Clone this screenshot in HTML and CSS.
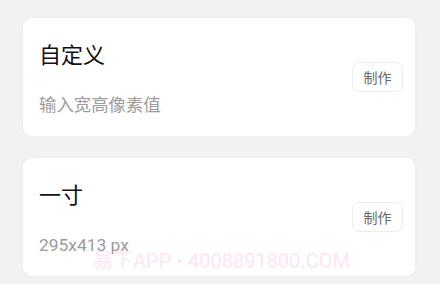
FILE: index.html
```
<!DOCTYPE html>
<html lang="zh">
<head>
<meta charset="utf-8">
<link rel="stylesheet" href="styles.css">
</head>
<body>
<div class="list">
  <div class="card">
    <div class="info">
      <div class="title">自定义</div>
      <div class="sub">输入宽高像素值</div>
    </div>
    <button class="btn">制作</button>
  </div>
  <div class="card">
    <div class="info">
      <div class="title">一寸</div>
      <div class="sub">295x413 px</div>
    </div>
    <button class="btn">制作</button>
  </div>
</div>
<div class="watermark">易下APP • 4008891800.COM</div>
</body>
</html>
```
FILE: styles.css
```
html, body {
  margin: 0;
  padding: 0;
  background: #f2f2f2;
  font-family: Roboto, "Noto Sans CJK SC", sans-serif;
  width: 440px;
  height: 284px;
  overflow: hidden;
  position: relative;
}
.list {
  display: flex;
  flex-direction: column;
  gap: 22px;
  padding: 18px 25px 0 23px;
}
.card {
  height: 118px;
  box-sizing: border-box;
  background: #fff;
  border-radius: 9px;
  box-shadow: 0 0 4px rgba(0,0,0,0.03);
  display: flex;
  align-items: center;
  justify-content: space-between;
  padding: 0 12px 0 16px;
}
.info {
  display: flex;
  flex-direction: column;
  align-self: stretch;
  padding-top: 23px;
}
.title {
  font-size: 22px;
  line-height: 30px;
  color: #111;
  margin-bottom: 23px;
}
.sub {
  font-size: 17.4px;
  line-height: 22px;
  color: #9c9c9c;
}
.btn {
  width: 51px;
  height: 30px;
  border: 1px solid #ececec;
  border-radius: 7px;
  background: #fff;
  font-family: "Noto Sans CJK SC", sans-serif;
  font-size: 14px;
  color: #6a6a6a;
  padding: 0;
}
.watermark {
  position: absolute;
  left: 93px;
  top: 248px;
  font-size: 20px;
  line-height: 26px;
  color: #fde6f4;
  font-family: Roboto, "Noto Sans CJK SC", sans-serif;
  white-space: nowrap;
}
```
